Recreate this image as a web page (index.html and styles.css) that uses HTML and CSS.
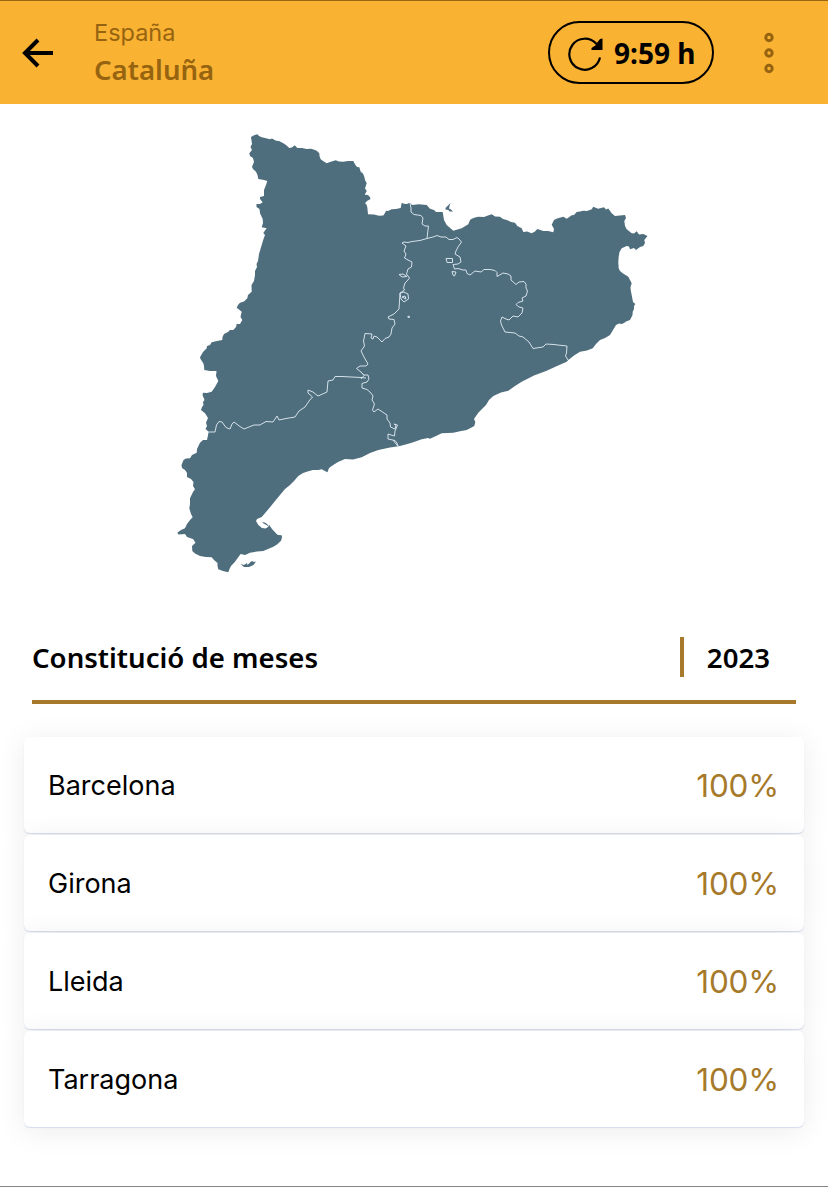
FILE: index.html
```html
<!DOCTYPE html>
<html lang="ca">
<head>
  <meta charset="UTF-8" />
  <meta name="viewport" content="width=device-width, initial-scale=1" />
  <title>Cataluña</title>
  <link rel="stylesheet" href="styles.css">
</head>
<body>

  <header class="topbar">
    <svg class="back" viewBox="0 0 32 30" width="32" height="30">
      <path d="M31 15H3M16 2L3 15l13 13" />
    </svg>
    <div class="titles">
      <div class="country">España</div>
      <h1>Cataluña</h1>
    </div>
    <div class="refresh">
      <svg viewBox="0 0 36 36" width="36" height="36">
        <path class="arc" d="M29.500 9A15.500 15.500 0 1 0 33 22.500" />
        <path class="tip" d="M35.500 3.500V15H24.500V13L29 10V9L33 4Z" />
      </svg>
      <span>9:59 h</span>
    </div>
    <svg class="menu" viewBox="0 0 12 42" width="12" height="42">
      <circle cx="6" cy="5.500" r="3.200" />
      <circle cx="6" cy="21" r="3.200" />
      <circle cx="6" cy="36.500" r="3.200" />
    </svg>
  </header>

  <main>
    <svg class="map" viewBox="170 120 490 460" width="490" height="460">
      <g class="land">
        <path d="M251 137L254 135.300L257.300 134.300L259 136L261.700 137.300L265 138L270 139.300L272 138.500L276 140.700L279 141L283.300 143.300L286 145L289.300 148L292 147.500L294.700 145.300L297.300 148L302 148L306.700 149L311 148.700L315 150L317 151L319.300 153.300L319.500 156L320.700 159.300L323 161L326.700 163.300L330 162L335.700 160.300L339 161.500L343.300 161.700L348 161L353.300 161L355.300 164.700L357 167L359.300 167.300L360.700 171.700L363 173.500L364.300 176.700L365 180L366.700 183.300L365 188.300L366.700 191L364.700 194.700L368 195L370 197.300L370.500 199L367 201L365 203.300L366.500 204.500L367.300 207.300L368 214.300L374 214.500L379 215.700L383.300 215.500L385 213L386 210.700L388 211L391.700 209.300L396 209L400.700 208L401.700 202.700L404 203.700L406.700 204L410 202.700L412 205L419 204.300L426.700 205L430 208.700L434 210L436 212L442.700 212L444 220L446.700 225L453.300 230.700L461.700 228.300L468.300 224.300L470 220L471.700 218.700L475 217.500L478.300 216.700L484 217L488 215.500L491.700 214.300L495 216.500L500 216.700L503 219L506.700 220L511 222L515 222.700L517.300 226L521.700 228.300L523.300 232L527 231.500L531.700 233.300L535 231.500L537.300 229L543.300 231L548 231L553.300 232.300L554 229L551.700 224.700L554 220L557 218.500L563.300 216.700L566.700 218.700L571.700 215.300L574 215L576.700 212L580 211.500L583.300 210.700L587 211L591.700 209.300L593.300 206.700L598 208.700L604 207.300L606 209.500L608.300 208.500L611.700 213.300L615 216L620 215.500L625 215L626 218L624.300 221L625 226L626.700 229.300L631.700 233.300L634 233.500L636.700 231.300L639 234.500L643.300 234L647.500 236L644.300 240L645 243L643.300 246L640 247L636 250L634 248L630 249.300L629 246.500L626.700 246L621.700 248.300L619.500 252L618.700 256.700L618.300 262L618.700 268.300L620 271L622.700 273.300L628.300 276.700L630 280L631.700 283.300L630.500 287L630.700 290L632.300 298.300L633 302L635.300 304L634 306L634 309L632.700 311.700L632.500 315L630 320L626 321.500L624 323L621.700 324L619 323.500L616 325L613 330L610 335L605 338L600 340L596 344L592.700 348.300L587 350.500L580 351.700L574 355.500L568.300 360L566.700 361.700L557 366L546.700 370.700L534 375.500L521.700 381.700L515 386L508.300 390.700L501 392.500L493.300 396L489 400L486 405L482 409L478.300 412.700L476 416L474 419L475.300 422L474.300 426L466.700 430L460 431.300L453.300 432.700L441.700 433.300L436 436L430 438.700L428 438L421.700 439.300L411 443L400 446L390 447.500L378.300 450L370 453L361.700 457.300L353 459.500L345 459L338 462L331.700 466L329 468L327.500 472.300L324 470.500L321.700 469.300L318 470L313 470L308.300 471.200L303 473L298.300 476L294 481L290 485L285 489L280 495L275 501L270 507.300L266 512L261.700 517L257 519L256 521L258.300 525L262 528L265.500 528.500L268 527L269.300 525L272 529L276.700 534L278 535L281.700 535.300L282 537.500L281 540.700L277 544.500L273.300 546.700L268 549L263.300 551L257 551.500L250 552.700L245 555L240.700 554L238 557.500L235 561.700L231 566L229.500 569L228.300 572.300L223 571L218.300 569.300L217.500 566L217.500 563L214 560L211.700 557.300L206 557L200 556L195 553.500L192.300 551L192 546L195.500 542.700L193 539L190.700 538.300L187 537L185 534L178.500 534.500L177.300 532.700L181 530L185 528.300L187 524L190 520L192.700 517.300L191 514L189.300 508.300L190 504L190 498.300L193 492L195 489.300L193 486L193.500 482L191 479L187 477L187 473L185 470L182 468L181.500 465L183.500 460L186 458.500L190 458.300L192 455L196.700 452.700L197 449L200 442.700L203 440L207 440L208.700 431.700L205.500 429L207 426L206 422.700L208 418L205 413.300L201 410L202 407L203.500 405L203 402L204.500 400L202.500 395L203 392.700L207 393L211.700 391.700L215 387L218.300 381L216 376L216.500 371L210 371L204.300 370L204 366L203.300 363.300L200.500 359L200 357.300L203 352L206.700 348.300L207 346L210 345L211.700 342.300L217 341L222.300 340L222.500 337L224 334L228 332L230 330L233.300 330L236 327L236.700 324L240 324L242.300 320L240.500 317L241.700 311.700L239 309.500L236.700 307.700L238 305L240 302.700L244 301.500L247.300 298.300L248 295L251.700 291.700L251.500 285L254 281L255 275L255 271L257 267L256.500 264L258 261L259 254L261.700 245L263.500 239L265 235L263.300 233L265 230.500L266.700 228.300L261.700 227.300L263 223L262.700 219L260 213.300L259.500 209L256.500 207L256.500 204L260 204L262.700 202.300L260 199L260 197L264 196L264 190L266 185L267.300 181L264 180L258.300 179L257.500 175L256 171.700L253 169L252 166.700L254 162L253 158L250 156L249.300 153.300L252 150L250.500 147L252 144Z" />
        <path d="M450.500 203L449 204.500L447.500 206L445.500 208L445.500 209.500L448.500 210L449.500 211.500L453 211.500L451 209.500L449 208.500L449.500 206Z" />
        <path d="M240.500 564L244 565L247 563L247.500 565L250 562.500L252 561L254 562L256 561.500L253.500 565L249 567L244 567Z" />
        <path d="M262 522.500Q265.500 521.500 269 526.500Q265.500 524.500 262 522.500Z" />
      </g>
      <g class="borders">
        <path d="M410 203L411 208L411 212L414 214.500L421 215.500L423 218L422 224L425 226L428.500 226L428 230L427 238.500" />
        <path d="M402 243L404 242L408 242.500L412 241.500L420 240.500L427 238.500L433 237L437 235.500L441 237L446 237L449 239.500L453 239.500L457 237.500L459 239L461.500 242L458 247L456 251L455 254L460 257L461 262L458 264L453 264.500L454.500 269L458 268.500L463 270L466 270L467 273.500L470 275L475 271L481 272L484 269.500L490 269.500L495 270.500L497 272.500L497 276.500L503 273L508 274L511 276L511 280L516 284.500L519 282L524 281.500L526 284L526 288L527.500 291L526 296L522 298L523 301L518 302.500L516 304.500L519 307L523 308L522 313L518 317L513 316L509 320L506 319L502 317L500.500 321L501.500 325L505 332L515 333L519 336L523 337L529 342L533 348.500L543 347L546 344L554 344.500L558 345L567 346L566.500 353L565.500 356L568 360" />
        <path d="M402 243L406 246L404 251L406 254L404.500 258L408 260L412 262L411.500 267L408 269L406.500 274L409.500 278L407 281L405 283L403.500 288L404.500 290L400 293L399.500 301L399 309L394 314L388 317L389 319L394 319.500L395 324L392 328L391 334L389 337L385 338.500L382 342L377 337L374 336L373 339L371 338L372 334L365 333.500L363.500 341L364.500 346L361 351L364.500 358L368 364L366 366L360 366L356.500 368.500L361 372L364 375.500L361 379" />
        <path d="M361 372L364 375L368 375L369 379L367 382L362 383.500L362 388L367 389.500L371 393L373 396L372 400L374.500 404L372.500 410L374 412L378 409L384 413L387 415L387 419L390 423L390.500 427L395 429L396 425.500L394 424L397.500 425L395 431L394.500 436L388 434L388 439L395 440.500L397 443L398.500 447L393 440" />
        <path d="M208.500 432L215 432L216.500 425L219 421.500L222 422L226 427.500L230 429L232 424L234 422L240 426.500L244 429L249 427L254 425L260 425L266 421.500L273 422L277 416L279 420L286 418.500L295 417L299 411L305 407L309 401L312.500 397L308 393L308 390L313 392L318 396L327 392L328 381L333 380L335 376.500L342 376.500L361 377.500L366 378" />
        <path d="M446 258.500H452.500V262.500H447ZM452 271.500L456 272L454.500 276L453 275ZM399 274.500L403 274L407 276.500L402 277ZM400 293L404 292L408 294L408.500 299L404 302L401 299ZM402 297L405 296L406 299ZM408 316L410 317L408 317.500Z" />
      </g>
    </svg>

    <section class="results">
      <div class="results-head">
        <h2>Constitució de meses</h2>
        <span class="year">2023</span>
      </div>
      <ul class="list">
        <li><span>Barcelona</span><span class="pct">100%</span></li>
        <li><span>Girona</span><span class="pct">100%</span></li>
        <li><span>Lleida</span><span class="pct">100%</span></li>
        <li><span>Tarragona</span><span class="pct">100%</span></li>
      </ul>
    </section>
  </main>

</body>
</html>
```
FILE: styles.css
```css
* {
  box-sizing: border-box;
}
body {
  margin: 0;
  height: 1187px;
  font-family: Inter, sans-serif;
  color: #000;
  background: #fff;
  border-bottom: 1px solid #858585;
  overflow: hidden;
}
h1, h2 {
  margin: 0;
  font-family: "Noto Sans", sans-serif;
  font-weight: 600;
}

/* top bar */
.topbar {
  display: flex;
  align-items: center;
  height: 104px;
  padding: 0 53px 0 22px;
  background: #fab232;
  border-top: 1px solid #986710;
}
.back {
  fill: none;
  stroke: #000;
  stroke-width: 4;
}
.titles {
  flex: 1;
  margin-left: 40px;
  color: #966410;
}
.country {
  font-size: 23.500px;
  line-height: 32px;
}
.titles h1 {
  font-size: 27.600px;
  line-height: 40px;
}
.refresh {
  display: flex;
  align-items: center;
  width: 166px;
  height: 63px;
  padding-left: 17px;
  border: 2px solid #000;
  border-radius: 32px;
  font-family: "Noto Sans", sans-serif;
  font-size: 28px;
  font-weight: 700;
}
.refresh span {
  margin-left: 11px;
  white-space: nowrap;
}
.refresh .arc {
  fill: none;
  stroke: #000;
  stroke-width: 2.200;
}
.menu {
  margin-left: 49px;
  fill: none;
  stroke: #966410;
  stroke-width: 3;
}

/* map */
.map {
  display: block;
  margin: 16px 0 0 170px;
}
.land {
  fill: #4e6d7d;
}
.borders {
  fill: none;
  stroke: #d5e2ea;
  stroke-width: 1;
  stroke-linejoin: round;
}

/* results */
.results-head {
  display: flex;
  align-items: center;
  justify-content: space-between;
  height: 88px;
  margin: 36px 32px 0;
  padding: 0 26px 2px 0;
  border-bottom: 4px solid #a67a2a;
}
.results-head h2,
.year {
  font-size: 27.600px;
  line-height: 40px;
}
.year {
  padding-left: 23px;
  border-left: 4px solid #a67a2a;
  font-family: "Noto Sans", sans-serif;
  font-weight: 600;
}
.list {
  display: flex;
  flex-direction: column;
  gap: 2px;
  margin: 33px 24px 0;
  padding: 0;
  list-style: none;
}
.list li {
  display: flex;
  align-items: center;
  justify-content: space-between;
  height: 96px;
  padding: 0 25px 0 24px;
  border-radius: 6px;
  background: #fff;
  box-shadow: 0 1px 1px #d6daec, 0 4px 30px rgba(0, 0, 0, 0.08);
  font-size: 27px;
}
.pct {
  color: #a67a2a;
  font-size: 31.500px;
  letter-spacing: -0.2px;
}
```
